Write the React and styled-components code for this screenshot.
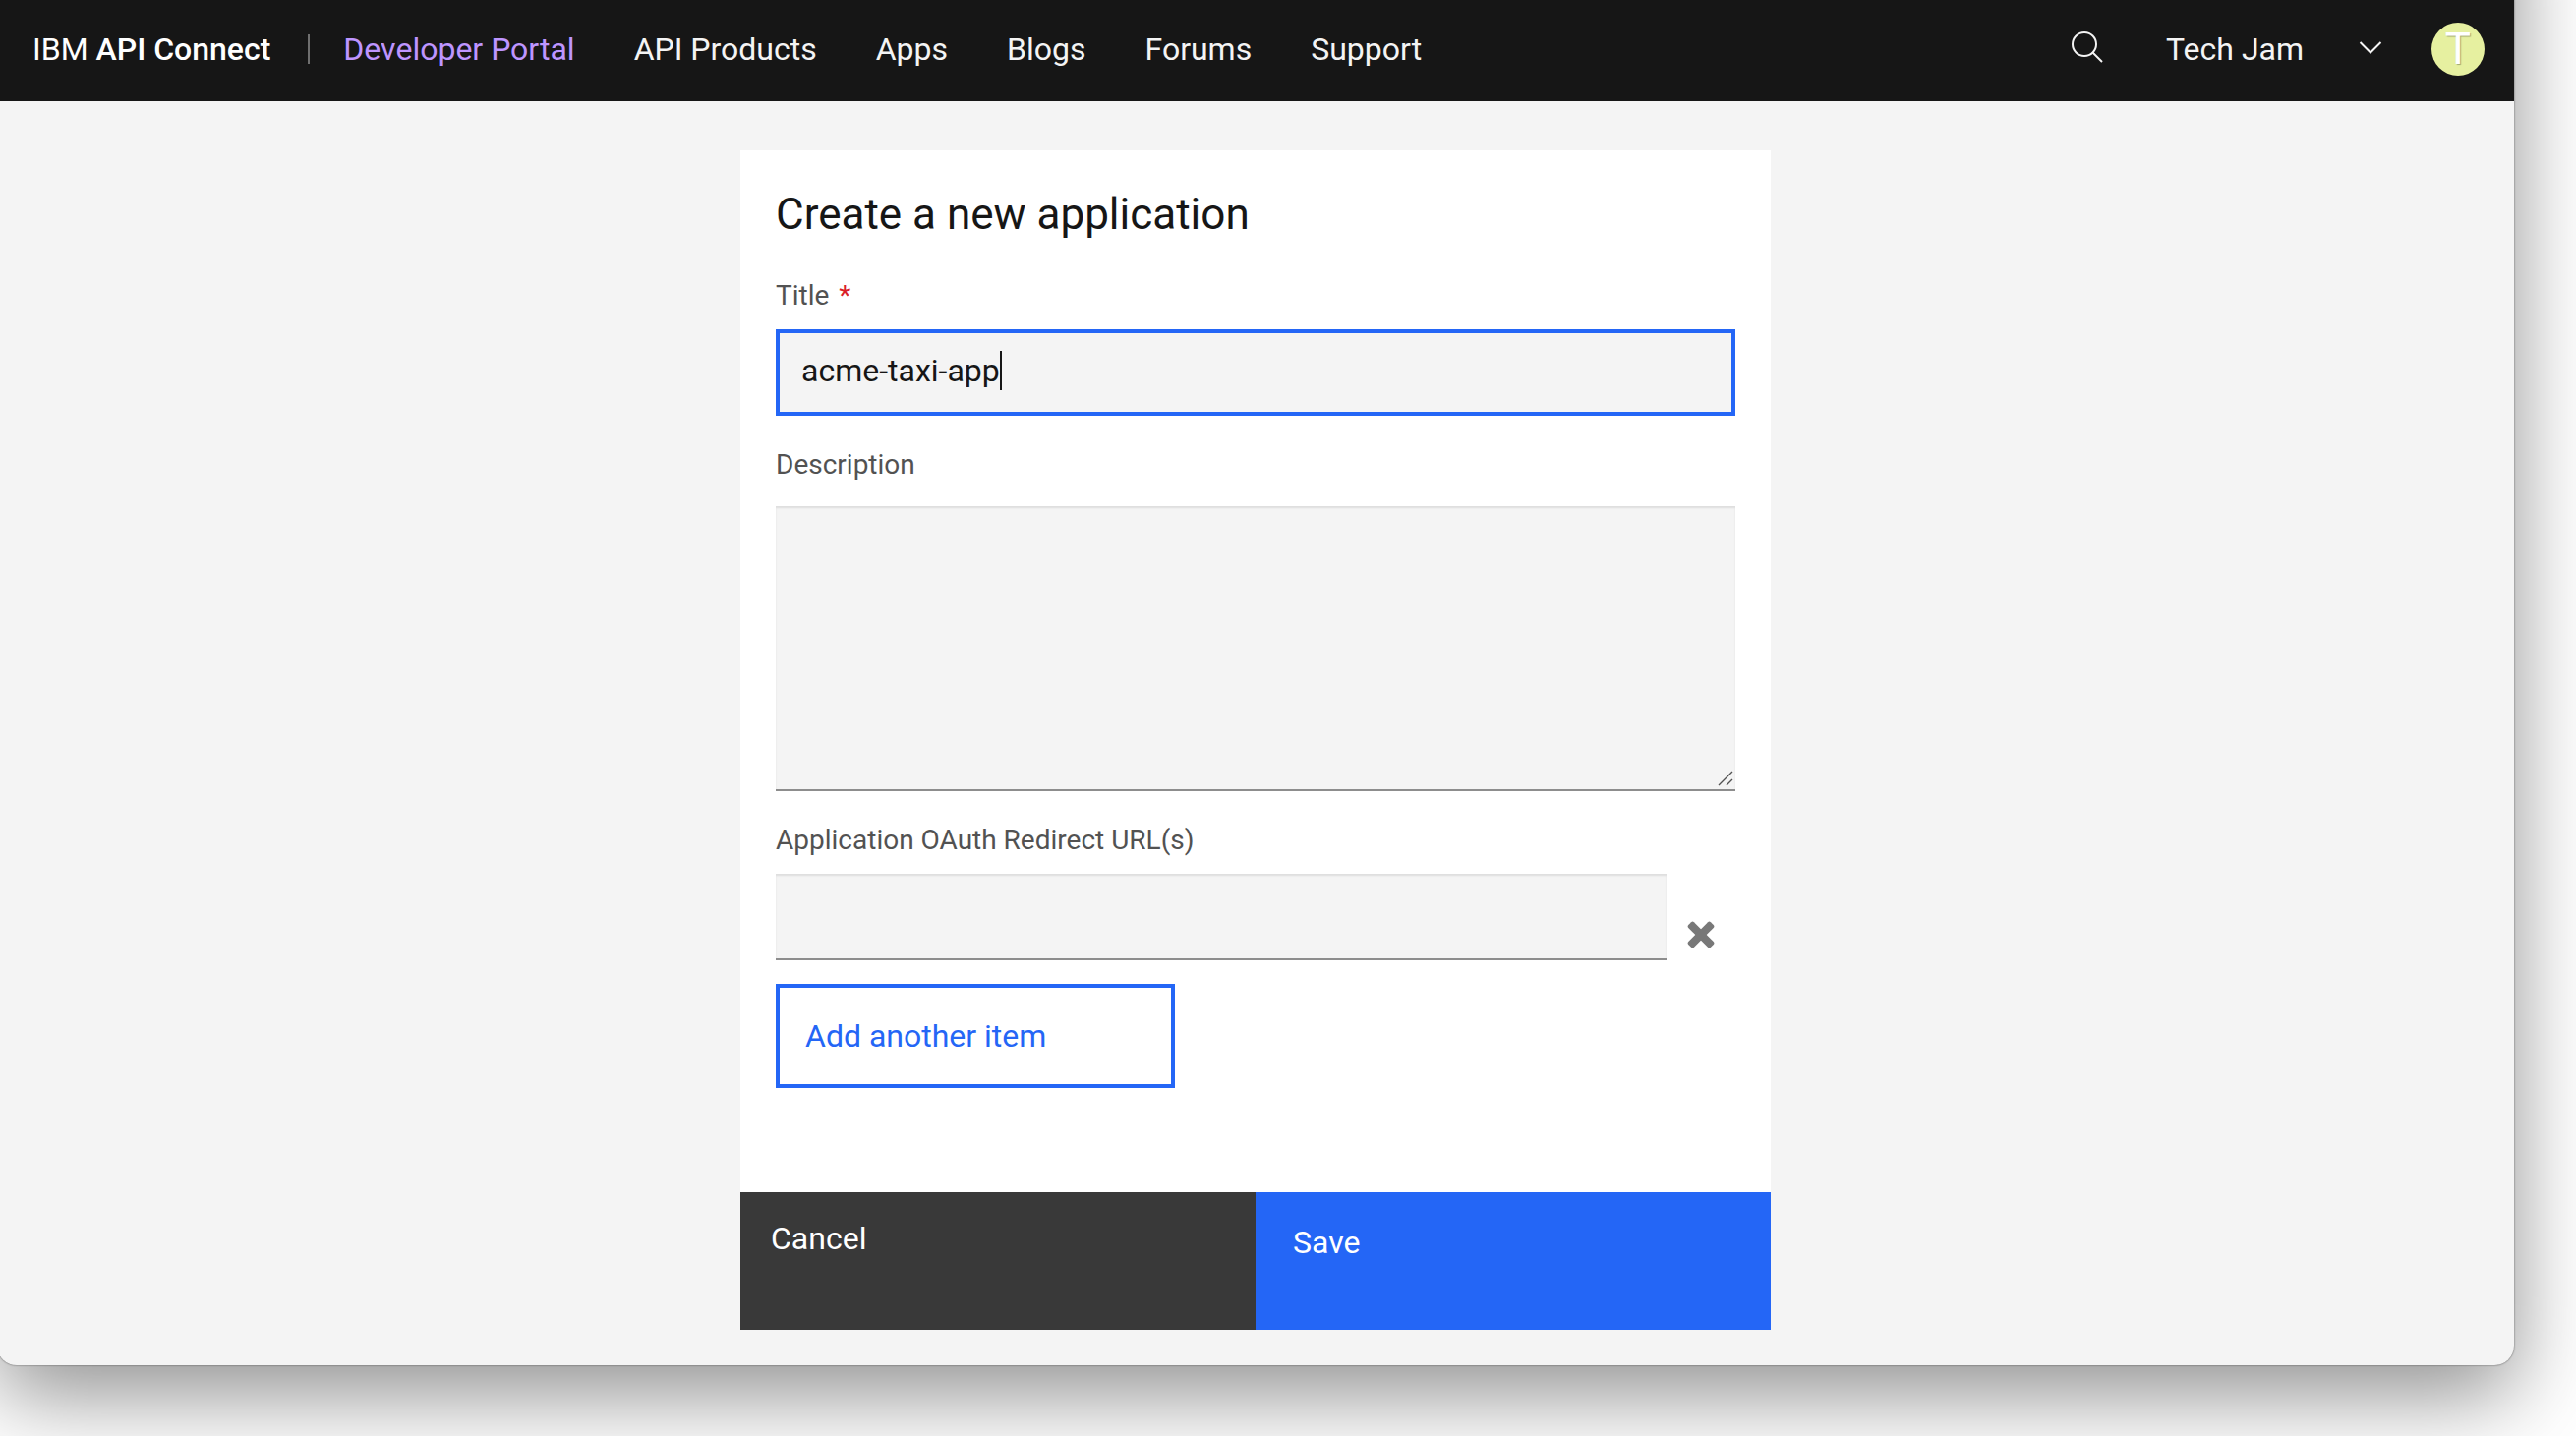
import React, { useState } from "react";
import styled, { createGlobalStyle } from "styled-components";

const GlobalStyle = createGlobalStyle`
  * { box-sizing: border-box; }
  body {
    margin: 0;
    background: #fff;
    color: #161616;
    font-family: Roboto, "Liberation Sans", sans-serif;
    font-size: 32px;
    line-height: 40px;
    overflow-x: hidden;
  }
  button, input, textarea { font: inherit; color: inherit; margin: 0; border-radius: 0; }
`;

const Window = styled.div`
  margin: -120px 63px 72px -3px;
  padding: 120px 0 36px;
  background: #f4f4f4;
  border-radius: 20px;
  box-shadow: 0 0 2px rgba(0, 0, 0, 0.6), 0 30px 88px rgba(0, 0, 0, 0.44);
`;

const Header = styled.header`
  display: flex;
  align-items: center;
  height: 103px;
  padding: 0 30px 4px 36px;
  background: #161616;
  color: #f4f4f4;
`;

const Brand = styled.a`
  color: #fff;
  text-decoration: none;
  white-space: nowrap;
  padding-right: 38px;

  strong { font-weight: 500; }
`;

const Divider = styled.span`
  width: 2px;
  height: 30px;
  background: #6f6f6f;
`;

const Nav = styled.nav`
  display: flex;
  gap: 60px;
  padding-left: 34px;
`;

const NavLink = styled.a`
  color: ${(p) => (p.$accent ? "#be95ff" : "#f4f4f4")};
  text-decoration: none;
  white-space: nowrap;
`;

const Account = styled.div`
  display: flex;
  align-items: center;
  margin-left: auto;
`;

const IconButton = styled.button`
  display: flex;
  align-items: center;
  justify-content: center;
  padding: 0;
  border: 0;
  background: none;
  color: inherit;
  cursor: pointer;
`;

const SearchButton = styled(IconButton)`
  width: 32px;
  height: 36px;
  margin-right: 64px;
  align-items: flex-start;
`;

const OrgButton = styled(IconButton)`
  gap: 56px;
  margin-right: 50px;
`;

const Avatar = styled.button`
  width: 54px;
  height: 54px;
  padding: 0;
  border: 0;
  border-radius: 50%;
  background: #e6f0a0;
  color: #fff;
  font-size: 44px;
  line-height: 54px;
  text-align: center;
  text-shadow: 1px 1px 1px rgba(0, 0, 0, 0.3);
`;

const Card = styled.form`
  display: flex;
  flex-direction: column;
  max-width: 1048px;
  margin: 50px auto 0;
  background: #fff;
`;

const CardBody = styled.div`
  padding: 36px 36px 106px;
`;

const Heading = styled.h1`
  margin: 0 0 36px;
  font-size: 44px;
  line-height: 58px;
  font-weight: 400;
`;

const Field = styled.div`
  margin-bottom: ${(p) => p.$gap || 32}px;
`;

const Label = styled.label`
  display: block;
  margin-bottom: ${(p) => p.$gap || 16}px;
  color: #525252;
  font-size: 28px;
  line-height: 36px;
`;

const Required = styled.span`
  margin-left: 10px;
  color: #da1e28;
`;

const FocusBox = styled.div`
  display: flex;
  align-items: center;
  height: 88px;
  padding: 0 22px 4px;
  border: 4px solid #2466f6;
  background: #f4f4f4;
`;

const FocusInput = styled.input`
  field-sizing: content;
  max-width: 100%;
  padding: 0;
  border: 0;
  outline: 0;
  background: none;
  caret-color: transparent;
`;

const Caret = styled.span`
  width: 2px;
  height: 40px;
  background: #161616;
`;

const TextInput = styled.input`
  flex: 1;
  min-width: 0;
  height: 88px;
  padding: 0 24px;
  border: 0;
  border-bottom: 2px solid #8d8d8d;
  background: #f4f4f4;
  box-shadow: inset 0 2px 2px #dedede;
  outline: 0;
`;

const AreaWrap = styled.div`
  position: relative;
  display: flex;
`;

const TextArea = styled.textarea`
  flex: 1;
  height: 290px;
  padding: 22px 24px;
  border: 0;
  border-bottom: 2px solid #8d8d8d;
  background: #f4f4f4;
  box-shadow: inset 0 2px 2px #dedede;
  outline: 0;
  resize: none;
`;

const Grip = styled.svg`
  position: absolute;
  right: 2px;
  bottom: 5px;
`;

const Row = styled.div`
  display: flex;
  align-items: flex-end;
`;

const RemoveButton = styled(IconButton)`
  width: 70px;
  height: 52px;
  color: #787878;
`;

const AddButton = styled.button`
  width: 406px;
  height: 106px;
  padding: 0 26px;
  border: 4px solid #2466f6;
  background: #fff;
  color: #2466f6;
  text-align: left;
  cursor: pointer;
`;

const Actions = styled.div`
  display: grid;
  grid-template-columns: 1fr 1fr;
`;

const ActionButton = styled.button`
  display: flex;
  align-items: flex-start;
  height: 140px;
  padding: ${(p) => (p.$primary ? "31px 38px" : "27px 31px")};
  border: 0;
  background: ${(p) => (p.$primary ? "#2466f6" : "#393939")};
  color: #fff;
  cursor: pointer;
`;

const NAV_ITEMS = ["Developer Portal", "API Products", "Apps", "Blogs", "Forums", "Support"];

function SearchIcon() {
  return (
    <svg width="32" height="32" viewBox="0 0 32 32" fill="none" stroke="currentColor" strokeWidth="2">
      <circle cx="13" cy="13" r="12" />
      <path d="M21.5 21.5L31 31" />
    </svg>
  );
}

function ChevronIcon() {
  return (
    <svg width="24" height="16" viewBox="0 0 24 16" fill="none" stroke="currentColor" strokeWidth="2">
      <path d="M1.5 1L12 11.5L22.5 1" />
    </svg>
  );
}

function CrossIcon() {
  return (
    <svg width="28" height="28" viewBox="0 0 28 28" fill="currentColor">
      <rect x="-2" y="10" width="32" height="8" rx="2" transform="rotate(45 14 14)" />
      <rect x="-2" y="10" width="32" height="8" rx="2" transform="rotate(-45 14 14)" />
    </svg>
  );
}

export default function App() {
  const [title, setTitle] = useState("acme-taxi-app");

  return (
    <>
      <GlobalStyle />
      <Window>
        <Header>
          <Brand href="#">
            IBM <strong>API Connect</strong>
          </Brand>
          <Divider />
          <Nav>
            {NAV_ITEMS.map((item, i) => (
              <NavLink key={item} href="#" $accent={i === 0}>
                {item}
              </NavLink>
            ))}
          </Nav>
          <Account>
            <SearchButton type="button" aria-label="Search">
              <SearchIcon />
            </SearchButton>
            <OrgButton type="button">
              Tech Jam
              <ChevronIcon />
            </OrgButton>
            <Avatar type="button">T</Avatar>
          </Account>
        </Header>
        <Card onSubmit={(e) => e.preventDefault()}>
          <CardBody>
            <Heading>Create a new application</Heading>
            <Field>
              <Label htmlFor="title">
                Title<Required>*</Required>
              </Label>
              <FocusBox>
                <FocusInput id="title" value={title} onChange={(e) => setTitle(e.target.value)} />
                <Caret />
              </FocusBox>
            </Field>
            <Field>
              <Label htmlFor="description" $gap={24}>
                Description
              </Label>
              <AreaWrap>
                <TextArea id="description" />
                <Grip width="16" height="16" viewBox="0 0 16 16" fill="none" stroke="#525252" strokeWidth="1.4">
                  <path d="M1 15L15 1M9 15L15 9" />
                </Grip>
              </AreaWrap>
            </Field>
            <Field $gap={24}>
              <Label htmlFor="redirect">Application OAuth Redirect URL(s)</Label>
              <Row>
                <TextInput id="redirect" />
                <RemoveButton type="button" aria-label="Remove">
                  <CrossIcon />
                </RemoveButton>
              </Row>
            </Field>
            <AddButton type="button">Add another item</AddButton>
          </CardBody>
          <Actions>
            <ActionButton type="button">Cancel</ActionButton>
            <ActionButton type="submit" $primary>
              Save
            </ActionButton>
          </Actions>
        </Card>
      </Window>
    </>
  );
}
